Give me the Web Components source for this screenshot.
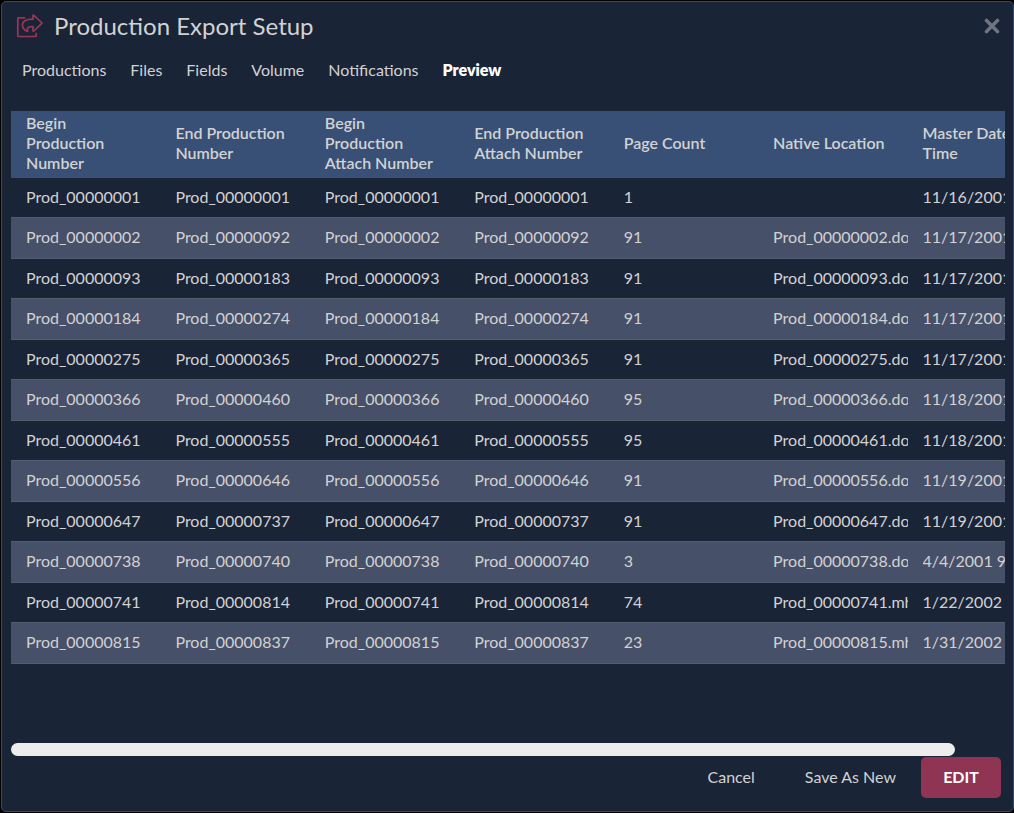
<!DOCTYPE html>
<html lang="en">
<head>
<meta charset="utf-8">
<title>Production Export Setup</title>
<style>
html{background:#000}
body{margin:0;font:16px/20px Lato,"Open Sans",sans-serif;color:#d2d2d2}
</style>
</head>
<body>
<export-dialog>
  <span slot="title">Production Export Setup</span>
  <tab-list slot="tabs">
    <tab-link href="#productions">Productions</tab-link>
    <tab-link href="#files">Files</tab-link>
    <tab-link href="#fields">Fields</tab-link>
    <tab-link href="#volume">Volume</tab-link>
    <tab-link href="#notifications">Notifications</tab-link>
    <tab-link href="#preview" active>Preview</tab-link>
  </tab-list>
  <preview-table></preview-table>
  <action-button slot="actions">Cancel</action-button>
  <action-button slot="actions">Save As New</action-button>
  <action-button slot="actions" primary>EDIT</action-button>
</export-dialog>
<script>
class BaseElement extends HTMLElement {
  constructor() {
    super();
    this.attachShadow({ mode: "open" }).innerHTML = this.template();
  }
}

customElements.define("export-icon", class extends BaseElement {
  template() {
    return `<style>:host{display:block;width:27px;height:24px;color:#9b3657}svg{display:block}</style>
    <svg width="27" height="24" viewBox="0 0 27 24" fill="none" stroke="currentColor" stroke-width="1.7" stroke-linejoin="round" stroke-linecap="round" aria-hidden="true">
      <path d="M8.500 3.800H2.600Q1.800 3.800 1.800 4.600V21.700Q1.800 22.500 2.600 22.500H19.400Q20.200 22.500 20.200 21.700V19.500"/>
      <path d="M17 1.600Q17 .6 17.800 1.300L25.600 8.500Q26.200 9.100 25.600 9.700L17.800 17Q17 17.600 17 16.600V12.500C11.800 12.400 10.600 14 11.700 16.800Q11.900 17.800 11 17.300C8 15.800 6.400 13.600 6.400 11C6.400 6.800 10 5.200 17 5.200Z"/>
    </svg>`;
  }
});

customElements.define("export-dialog", class extends BaseElement {
  template() {
    return `<style>
      :host{display:flex;flex-direction:column;box-sizing:border-box;min-height:calc(100vh - 2px);margin:1px 0 1px 1px;border:1px solid #34496b;border-radius:5px;background:#1a2437;overflow:hidden}
      header{display:flex;align-items:center;gap:11px;padding:7px 11px 1px 14px;height:34px}
      h1{margin:0;flex:1;font-size:24px;line-height:32px;font-weight:400}
      .close{display:grid;place-items:center;width:20px;height:20px;padding:0;border:0;background:none;color:#6d7482;cursor:pointer}
      main{flex:1;display:flex;min-width:0;margin:31px 8px 0 9px}
      ::slotted(preview-table){flex:1}
      footer{display:flex;justify-content:flex-end;padding:1px 12px 13px}
    </style>
    <header><export-icon></export-icon><h1><slot name="title"></slot></h1>
      <button class="close" type="button" aria-label="Close"><svg width="16" height="16" viewBox="0 0 16 16" stroke="currentColor" stroke-width="3.600" stroke-linecap="round"><path d="M2.500 2.500L13.500 13.500M13.500 2.500L2.500 13.500"/></svg></button>
    </header>
    <slot name="tabs"></slot>
    <main><slot></slot></main>
    <footer><slot name="actions"></slot></footer>`;
  }
});

customElements.define("tab-list", class extends BaseElement {
  template() {
    return `<style>:host{display:block;padding:16px 20px 0}nav{display:flex;gap:24px}</style><nav><slot></slot></nav>`;
  }
});

customElements.define("tab-link", class extends BaseElement {
  template() {
    return `<style>:host{display:block}a{display:block;color:inherit;text-decoration:none}
      :host([active]) a{color:#fff;font-weight:800}</style><a><slot></slot></a>`;
  }
  connectedCallback() {
    this.shadowRoot.querySelector("a").href = this.getAttribute("href");
  }
});

customElements.define("action-button", class extends BaseElement {
  template() {
    return `<style>:host{display:block}
      button{display:block;height:41px;padding:0 25px 2px;border:0;border-radius:5px;background:none;font:inherit;color:inherit;cursor:pointer}
      :host([primary]) button{width:80px;padding:0 0 2px;background:#8f3553;color:#fff;font-weight:700}
    </style><button type="button"><slot></slot></button>`;
  }
});

customElements.define("preview-table", class extends BaseElement {
  template() {
    const pad = n => "Prod_" + String(n).padStart(8, "0");
    const heads = ["Begin Production Number", "End Production Number", "Begin Production Attach Number", "End Production Attach Number", "Page Count", "Native Location", "Master Date Time"];
    const rows = [
      [1, 1, 1, "", "11/16/2001"], [2, 92, 91, ".doc", "11/17/2001"],
      [93, 183, 91, ".doc", "11/17/2001"], [184, 274, 91, ".doc", "11/17/2001"],
      [275, 365, 91, ".doc", "11/17/2001"], [366, 460, 95, ".doc", "11/18/2001"],
      [461, 555, 95, ".doc", "11/18/2001"], [556, 646, 91, ".doc", "11/19/2001"],
      [647, 737, 91, ".doc", "11/19/2001"], [738, 740, 3, ".doc", "4/4/2001 9:"],
      [741, 814, 74, ".mht", "1/22/2002 3"], [815, 837, 23, ".mht", "1/31/2002 9"]
    ];
    const body = rows.map(([a, b, n, ext, date]) =>
      "<tr>" + [pad(a), pad(b), pad(a), pad(b), n, ext ? pad(a) + ext : "", date]
        .map(c => `<td><div>${c}</div></td>`).join("") + "</tr>").join("");
    return `<style>
      :host{display:flex;flex-direction:column;min-width:0}
      .scroller{flex:1;overflow-x:auto;scrollbar-width:none;padding-bottom:60px}
      table{width:1046px;min-width:100%;table-layout:fixed;border-collapse:separate;border-spacing:0}
      th,td{box-sizing:border-box;padding:0 0 2px 15px;text-align:left;vertical-align:middle}
      th{height:67px;padding-right:15px;padding-bottom:4px;background:#385076;font-weight:600;line-height:20px}
      td{height:39px}
      td div{overflow:hidden;white-space:nowrap}
      tbody tr:nth-child(even) td{height:42px;background:#475069;border-top:1px solid #525d6f;border-bottom:1px solid #525d6f}
      .bar{width:95%;height:13px;border-radius:7px;background:#ededed}
    </style>
    <div class="scroller"><table><thead><tr>${heads.map(h => `<th scope="col">${h}</th>`).join("")}</tr></thead><tbody>${body}</tbody></table></div>
    <div class="bar"></div>`;
  }
});
</script>
</body>
</html>
